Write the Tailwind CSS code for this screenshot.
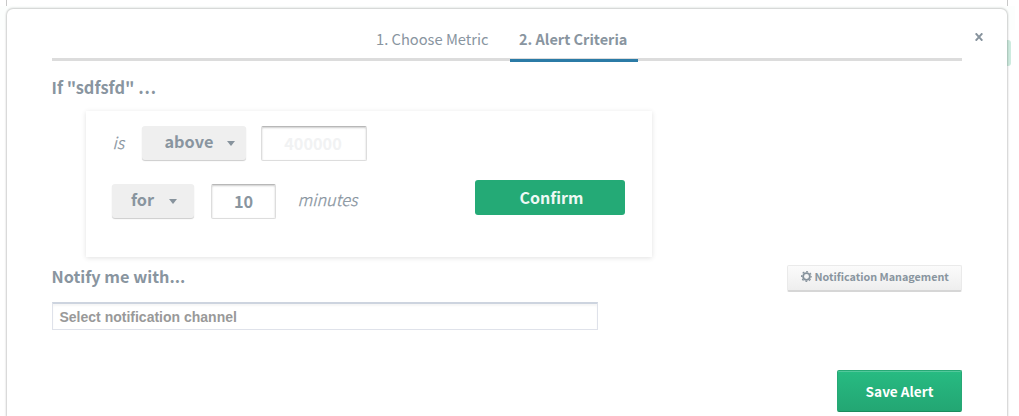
<!DOCTYPE html>
<html lang="en">
<head>
<meta charset="utf-8">
<title>Alert Criteria</title>
<script src="https://cdn.jsdelivr.net/npm/@tailwindcss/browser@4"></script>
</head>
<body class="relative h-[416px] w-[1019px] overflow-hidden bg-white font-['Noto_Sans_CJK_SC','Noto_Sans',sans-serif] text-[#89959f]">
  <!-- page content peeking out behind the dialog -->
  <div class="absolute left-0 top-[6px] h-[24px] w-[1015px] bg-[#fcfefd]"></div>
  <div class="absolute left-[6px] top-0 h-[6px] w-px bg-[#c8c8c8]"></div>
  <div class="absolute left-[1007px] top-0 h-[6px] w-px bg-[#c8c8c8]"></div>
  <div class="absolute left-[1000px] top-[40px] h-[26px] w-[11px] rounded-[3px] bg-[#cdebdf]"></div>

  <main class="relative ml-[7px] mt-[9px] h-[407px] w-[1000px] rounded-t-[6px] bg-white px-[45px] shadow-[0_0_2px_1px_rgba(0,0,0,0.2)]">
    <nav class="flex h-[52px] border-b-[3px] border-[#dcdcdc] text-[14.5px] leading-[20px]">
      <span class="ml-[315px] h-[52px] w-[142.5px] whitespace-nowrap pl-[9px] pt-[20px] text-[14.7px]">1. Choose Metric</span>
      <span class="h-[52.5px] w-[128px] whitespace-nowrap border-b-[3px] border-[#2b7ba6] pl-[9.5px] pt-[20px] font-bold">2. Alert Criteria</span>
    </nav>
    <button class="absolute left-[966px] top-[17.5px] flex h-[20px] w-[12px] items-center justify-center" aria-label="Close">
      <svg width="8" height="8" viewBox="0 0 8 8" fill="none" stroke="#87939d" stroke-width="1.9"><path d="M.7.3 7.3 7.7M7.3.3.7 7.7"/></svg>
    </button>

    <h2 class="-ml-[0.5px] mt-[14px] h-[27px] whitespace-nowrap text-[16.4px] font-bold leading-[24px]">If "sdfsfd" …</h2>

    <section class="ml-[34px] flex h-[146px] w-[566px] flex-col bg-white pl-[26px] pt-[15px] shadow-[0_1px_5px_rgba(0,0,0,0.12)] mt-[9px]">
      <div class="flex h-[58px] items-start text-[16.3px] leading-[30px]">
        <span class="w-[30px] pl-[0.5px] pt-px font-light italic [-webkit-text-stroke:0.3px]">is</span>
        <div class="flex h-[34px] w-[104px] items-start rounded-[3px] bg-[#efefef] pl-[22.5px] font-bold shadow-[0_1px_1px_rgba(0,0,0,0.2)]">
          <span class="w-[62px]">above</span>
          <svg class="mt-[15px]" width="8" height="5" viewBox="0 0 8 5" fill="#87939d"><path d="M0 0h8L4 5z"/></svg>
        </div>
        <div class="ml-[15px] h-[35px] w-[106px] rounded-[2px] border border-[#dddddd] border-t-[#b8b8b8] pr-[2px] pt-px text-center font-bold text-[#f1f2f3] shadow-[inset_0_1px_2px_rgba(0,0,0,0.2)]">400000</div>
      </div>
      <div class="flex items-start text-[16.3px] leading-[30px]">
        <div class="flex h-[34px] w-[81.5px] items-start rounded-[3px] bg-[#efefef] pl-[19px] font-bold shadow-[0_1px_1px_rgba(0,0,0,0.2)]">
          <span class="w-[38px]">for</span>
          <svg class="mt-[15px]" width="8" height="5" viewBox="0 0 8 5" fill="#87939d"><path d="M0 0h8L4 5z"/></svg>
        </div>
        <div class="ml-[17.5px] h-[35px] w-[65px] rounded-[2px] border border-[#dddddd] border-t-[#b8b8b8] pt-px text-center font-bold shadow-[inset_0_1px_2px_rgba(0,0,0,0.2)]">10</div>
        <span class="ml-[21.5px] w-[177.5px] font-light italic [-webkit-text-stroke:0.3px]">minutes</span>
        <button class="-mt-[4px] h-[35px] w-[150px] rounded-[3px] bg-[#24aa76] pb-[2px] pl-[3px] text-center text-[16px] font-bold text-[#eef8f4]">Confirm</button>
      </div>
    </section>

    <div class="mt-[8px] flex h-[37px] justify-between">
      <h2 class="-ml-[0.5px] -mt-px whitespace-nowrap text-[16.3px] font-bold leading-[24px]">Notify me with...</h2>
      <button class="flex h-[26.5px] w-[175px] items-start whitespace-nowrap rounded-[2px] border border-[#eaeaea] border-b-2 border-b-[#d6d6d6] bg-linear-to-b from-[#fbfbfb] to-[#eeeeee] pl-[12.5px] text-[10.75px] font-bold leading-[22px]">
        <svg class="mr-[3px] mt-[5px]" width="11" height="11" viewBox="0 0 10 10" fill="none" stroke="#87939d"><circle cx="5" cy="5" r="3.1" stroke-width="1.7"/><circle cx="5" cy="5" r="4.4" stroke-width="1.2" stroke-dasharray="1.7 1.756" stroke-dashoffset=".85"/></svg>
        <span>Notification Management</span>
      </button>
    </div>

    <div class="h-[28px] w-[546px] whitespace-nowrap border border-t-2 border-[#dfe2ea] border-t-[#cdd4df] pl-[6.5px] font-['Liberation_Sans',sans-serif] text-[14px] font-bold leading-[26px] text-[#999999] shadow-[inset_0_2px_2px_rgba(0,0,0,0.04)]">Select notification channel</div>

    <div class="mt-[40px] flex justify-end">
      <button class="h-[42px] w-[125px] rounded-[2px] border border-[#27a875] border-b-[#1c8b5d] bg-linear-to-b from-[#27bb82] to-[#23a673] text-center text-[13.6px] font-bold leading-[40px] text-white shadow-[inset_0_1px_0_rgba(255,255,255,0.2)]">Save Alert</button>
    </div>
  </main>
</body>
</html>
